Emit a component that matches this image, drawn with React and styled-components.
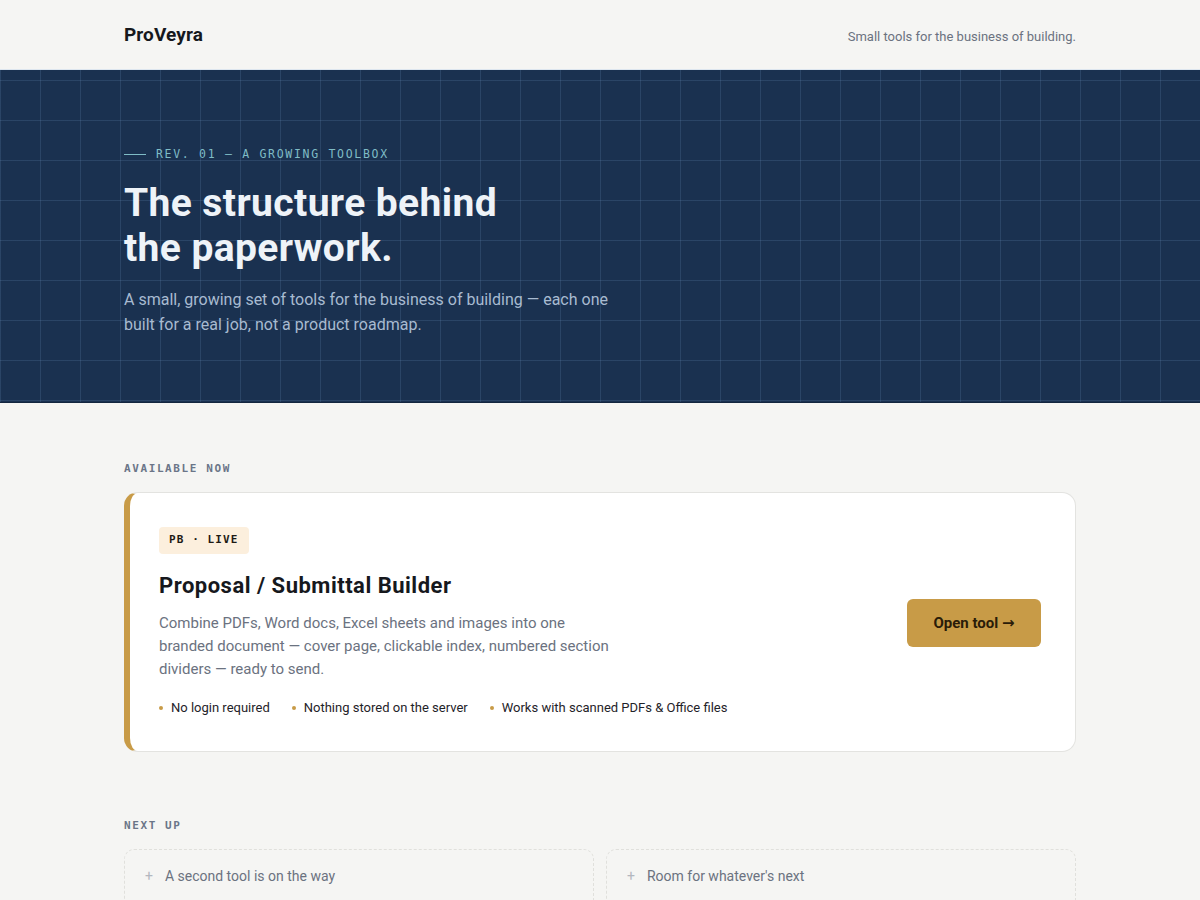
import React from 'react';
import styled, { createGlobalStyle } from 'styled-components';

const sans = `Roboto, "Noto Sans", sans-serif`;
const mono = `"DejaVu Sans Mono", "Liberation Mono", monospace`;

const GlobalStyle = createGlobalStyle`
    * { box-sizing: border-box; }
    body {
        margin: 0;
        background: #f5f5f3;
        font-family: ${sans};
        color: #16181d;
    }
`;

const Wrap = styled.div`
    max-width: 952px;
    margin: 0 auto;
`;

const Header = styled.header`
    height: 70px;
    background: #f5f5f3;
    border-bottom: 1px solid #dde6ef;
`;

const HeaderRow = styled(Wrap)`
    height: 100%;
    display: flex;
    align-items: center;
    justify-content: space-between;
`;

const Logo = styled.div`
    font-size: 19px;
    font-weight: 700;
    letter-spacing: 0.1px;
    color: #16181d;
`;

const Tagline = styled.div`
    font-size: 13px;
    color: #6b7280;
    padding-top: 3px;
`;

const Hero = styled.section`
    background-color: #1a3150;
    background-image:
        linear-gradient(to right, rgba(120, 160, 200, 0.18) 1px, transparent 1px),
        linear-gradient(to bottom, rgba(120, 160, 200, 0.18) 1px, transparent 1px);
    background-size: 40px 40px;
    background-position: 0 10px;
    border-bottom: 1px solid #13263f;
    padding: 77px 0 65px;
`;

const Eyebrow = styled.div`
    display: flex;
    align-items: center;
    gap: 10px;
    font-family: ${mono};
    font-size: 11.5px;
    letter-spacing: 1.7px;
    color: #7fbcc6;
    text-transform: uppercase;

    &::before {
        content: '';
        width: 22px;
        height: 1px;
        background: #7fbcc6;
    }
`;

const Title = styled.h1`
    margin: 20px 0 16px;
    font-size: 39px;
    line-height: 45px;
    font-weight: 700;
    color: #eef3f8;
    letter-spacing: 0.4px;
`;

const Lead = styled.p`
    margin: 0;
    max-width: 500px;
    font-size: 16px;
    line-height: 25px;
    color: #a8bbd1;
`;

const Main = styled(Wrap)`
    padding: 59px 0 0;
`;

const SectionLabel = styled.div`
    font-family: ${mono};
    font-size: 11px;
    font-weight: 700;
    letter-spacing: 1.6px;
    color: #6b7588;
    text-transform: uppercase;
    margin-bottom: 17px;
`;

const Card = styled.div`
    display: flex;
    align-items: center;
    justify-content: space-between;
    background: #fff;
    border: 1px solid #e3e3e0;
    border-left: 6px solid #c89b47;
    border-radius: 14px;
    padding: 34px 34px 36px 29px;
    margin-bottom: 67px;
`;

const CardBody = styled.div`
    display: flex;
    flex-direction: column;
    align-items: flex-start;
`;

const Badge = styled.span`
    font-family: ${mono};
    font-size: 11px;
    font-weight: 700;
    letter-spacing: 1.1px;
    line-height: 14px;
    color: #1e1a14;
    background: #fcefdd;
    border-radius: 4px;
    padding: 6px 10px 7px;
`;

const CardTitle = styled.h2`
    margin: 17px 0 11px;
    font-size: 22px;
    line-height: 30px;
    font-weight: 700;
    letter-spacing: 0.5px;
    color: #16181d;
`;

const CardText = styled.p`
    margin: 0 0 19px;
    max-width: 470px;
    font-size: 15px;
    line-height: 23px;
    color: #6b7280;
`;

const Points = styled.ul`
    display: flex;
    gap: 22px;
    margin: 0;
    padding: 0;
    list-style: none;
`;

const Point = styled.li`
    display: flex;
    align-items: center;
    gap: 8px;
    font-size: 13px;
    color: #1f2329;

    &::before {
        content: '';
        width: 4px;
        height: 4px;
        border-radius: 50%;
        background: #c89b47;
    }
`;

const OpenButton = styled.button`
    width: 134px;
    height: 48px;
    margin-top: 3px;
    border: none;
    border-radius: 6px;
    background: #c89b47;
    color: #2a1c08;
    font-family: ${sans};
    font-size: 15px;
    font-weight: 700;
    cursor: pointer;
    flex-shrink: 0;
`;

const Arrow = styled.span`
    font-family: "DejaVu Sans", sans-serif;
    font-size: 15px;
`;

const Grid = styled.div`
    display: grid;
    grid-template-columns: 1fr 1fr;
    gap: 12px;
`;

const Slot = styled.div`
    display: flex;
    align-items: center;
    gap: 12px;
    border: 1px dashed #e0e0dc;
    border-radius: 10px;
    padding: 18px 20px 60px;
    font-size: 14px;
    color: #6b7280;
`;

const Plus = styled.span`
    color: #b3b7bf;
    font-size: 14px;
`;

const points = [
    'No login required',
    'Nothing stored on the server',
    'Works with scanned PDFs & Office files',
];

const upcoming = ['A second tool is on the way', "Room for whatever's next"];

const App = () => (
    <>
        <GlobalStyle />
        <Header>
            <HeaderRow>
                <Logo>ProVeyra</Logo>
                <Tagline>Small tools for the business of building.</Tagline>
            </HeaderRow>
        </Header>
        <Hero>
            <Wrap>
                <Eyebrow>Rev. 01 — A growing toolbox</Eyebrow>
                <Title>
                    The structure behind
                    <br />
                    the paperwork.
                </Title>
                <Lead>
                    A small, growing set of tools for the business of building — each one
                    built for a real job, not a product roadmap.
                </Lead>
            </Wrap>
        </Hero>
        <Main>
            <SectionLabel>Available now</SectionLabel>
            <Card>
                <CardBody>
                    <Badge>PB · LIVE</Badge>
                    <CardTitle>Proposal / Submittal Builder</CardTitle>
                    <CardText>
                        Combine PDFs, Word docs, Excel sheets and images into one
                        <br />
                        branded document — cover page, clickable index, numbered section
                        dividers — ready to send.
                    </CardText>
                    <Points>
                        {points.map(p => (
                            <Point key={p}>{p}</Point>
                        ))}
                    </Points>
                </CardBody>
                <OpenButton>
                    Open tool <Arrow>→</Arrow>
                </OpenButton>
            </Card>
            <SectionLabel>Next up</SectionLabel>
            <Grid>
                {upcoming.map(u => (
                    <Slot key={u}>
                        <Plus>+</Plus>
                        {u}
                    </Slot>
                ))}
            </Grid>
        </Main>
    </>
);

export default App;
